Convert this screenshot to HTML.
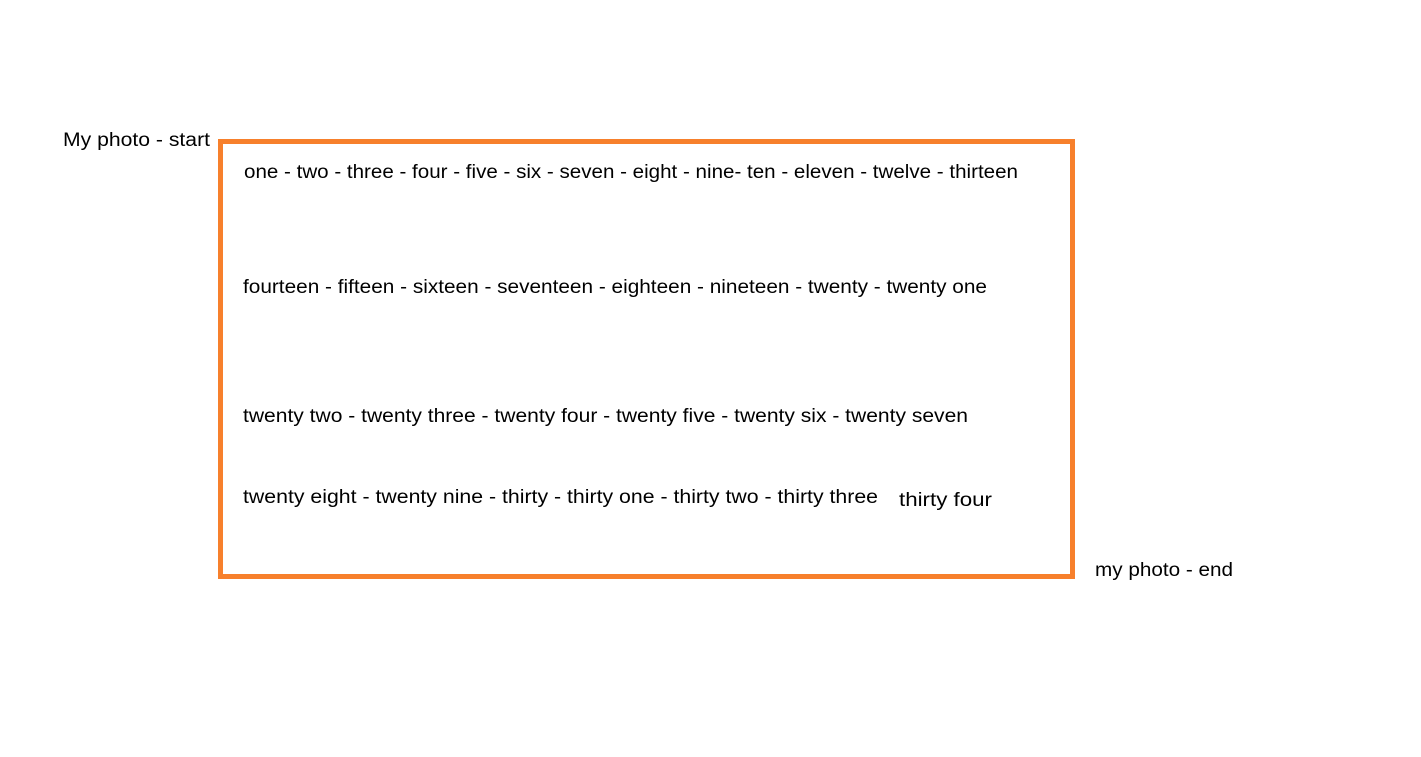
<!DOCTYPE html>
<html><head><meta charset="utf-8"><style>
html,body{margin:0;padding:0;background:#fff;width:1421px;height:757px;overflow:hidden}
svg{display:block}
text{font-family:"Liberation Sans",sans-serif;font-size:19px;fill:#000}
</style></head><body>
<svg width="1421" height="757" xmlns="http://www.w3.org/2000/svg">
<rect x="220.5" y="141.5" width="852" height="435" fill="none" stroke="#F7802C" stroke-width="5"/>
<text x="63" y="146" textLength="147" lengthAdjust="spacingAndGlyphs">My photo - start</text>
<text x="244" y="178" textLength="774" lengthAdjust="spacingAndGlyphs">one - two - three - four - five - six - seven - eight - nine- ten - eleven - twelve - thirteen</text>
<text x="243" y="293" textLength="744" lengthAdjust="spacingAndGlyphs">fourteen - fifteen - sixteen - seventeen - eighteen - nineteen - twenty - twenty one</text>
<text x="243" y="422" textLength="725" lengthAdjust="spacingAndGlyphs">twenty two - twenty three - twenty four - twenty five - twenty six - twenty seven</text>
<text x="243" y="503" textLength="635" lengthAdjust="spacingAndGlyphs">twenty eight - twenty nine - thirty - thirty one - thirty two - thirty three</text>
<text x="899" y="506" textLength="93" lengthAdjust="spacingAndGlyphs">thirty four</text>
<text x="1095" y="576" textLength="138" lengthAdjust="spacingAndGlyphs">my photo - end</text>
</svg>
</body></html>
